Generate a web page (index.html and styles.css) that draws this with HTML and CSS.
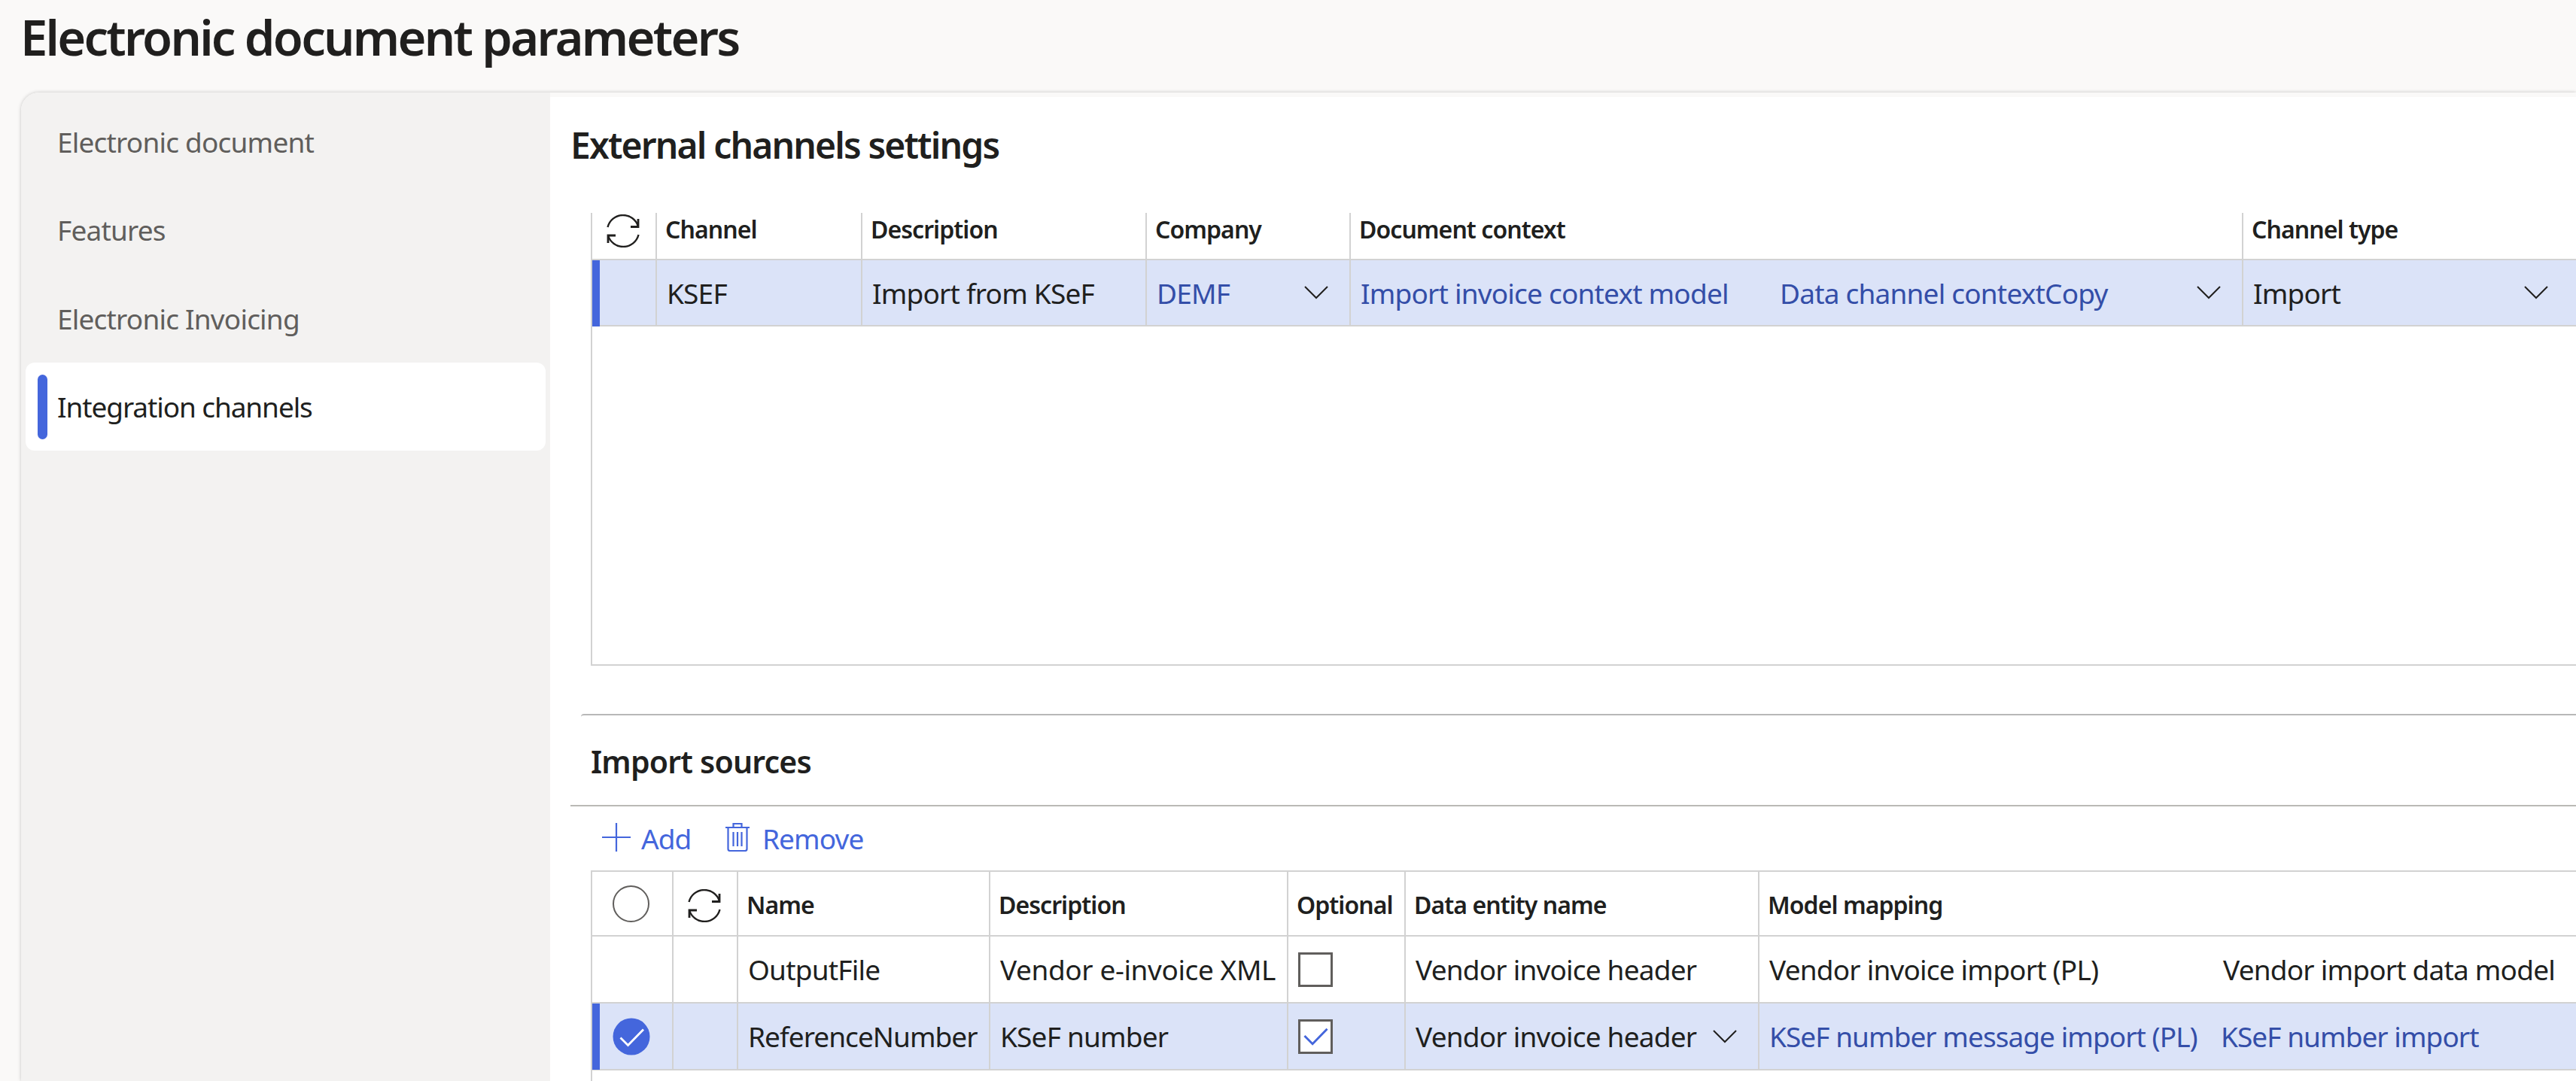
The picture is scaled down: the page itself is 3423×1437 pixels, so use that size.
FILE: index.html
```html
<!DOCTYPE html>
<html lang="en">
<head>
  <meta charset="UTF-8" />
  <meta name="viewport" content="width=device-width, initial-scale=1.0"/>
  <title>Electronic document parameters</title>
  <link rel="stylesheet" href="styles.css">
</head>
<body>
  <svg class="sprite">
    <symbol id="chevron" viewBox="0 0 32 18"><path d="M1 1l15 15L31 1" fill="none" stroke="currentColor" stroke-width="2"/></symbol>
    <symbol id="refresh" viewBox="0 0 44 44">
      <path d="M1.5 17A21 21 0 0 1 42 16M42.500 27A21 21 0 0 1 2 28" fill="none" stroke="currentColor" stroke-width="2.400"/>
      <path d="M42 6v10.500H32M2 38V28h10" fill="none" stroke="currentColor" stroke-width="2.800"/>
    </symbol>
  </svg>

  <h1 class="page-title"><span>Electronic document parameters</span></h1>

  <div class="card">
    <nav class="sidebar">
      <a class="tab">Electronic document</a>
      <a class="tab">Features</a>
      <a class="tab">Electronic Invoicing</a>
      <a class="tab active">Integration channels</a>
    </nav>

    <main class="content">
      <h2 class="section-title"><span>External channels settings</span></h2>

      <div class="grid channels">
        <div class="row head">
          <div class="cell icon-cell"><svg class="refresh"><use href="#refresh"/></svg></div>
          <div class="cell"><span>Channel</span></div>
          <div class="cell"><span>Description</span></div>
          <div class="cell"><span>Company</span></div>
          <div class="cell"><span>Document context</span></div>
          <div class="cell"><span>Channel type</span></div>
        </div>
        <div class="row selected">
          <div class="cell"></div>
          <div class="cell"><span>KSEF</span></div>
          <div class="cell"><span>Import from KSeF</span></div>
          <div class="cell"><span class="link">DEMF</span><svg class="chevron"><use href="#chevron"/></svg></div>
          <div class="cell"><span class="link first">Import invoice context model</span><span class="link">Data channel contextCopy</span><svg class="chevron"><use href="#chevron"/></svg></div>
          <div class="cell type"><span>Import</span><svg class="chevron"><use href="#chevron"/></svg></div>
        </div>
      </div>

      <div class="sources-head">
        <h3 class="sources-title"><span>Import sources</span></h3>
      </div>

      <div class="toolbar">
        <a class="tool"><svg class="plus" viewBox="0 0 38 38"><path d="M19 0v38M0 19h38" fill="none" stroke="currentColor" stroke-width="2.200"/></svg><span class="add">Add</span></a>
        <a class="tool"><svg class="trash" viewBox="0 0 32 38"><path d="M0 6h32M10.500 6V1h11v5M3.500 6v28.500q0 2.500 2.500 2.500h20q2.500 0 2.500-2.500V6M10.500 12v19M16 12v19M21.500 12v19" fill="none" stroke="currentColor" stroke-width="2.200"/></svg><span class="remove">Remove</span></a>
      </div>

      <div class="grid sources">
        <div class="row head">
          <div class="cell icon-cell mark"><i class="ring"></i></div>
          <div class="cell icon-cell"><svg class="refresh"><use href="#refresh"/></svg></div>
          <div class="cell"><span>Name</span></div>
          <div class="cell"><span>Description</span></div>
          <div class="cell"><span>Optional</span></div>
          <div class="cell"><span>Data entity name</span></div>
          <div class="cell"><span>Model mapping</span></div>
        </div>
        <div class="row">
          <div class="cell"></div>
          <div class="cell"></div>
          <div class="cell"><span>OutputFile</span></div>
          <div class="cell"><span class="loose">Vendor e-invoice XML</span></div>
          <div class="cell"><i class="box"></i></div>
          <div class="cell"><span>Vendor invoice header</span></div>
          <div class="cell"><span class="first">Vendor invoice import (PL)</span><span>Vendor import data model</span></div>
        </div>
        <div class="row selected">
          <div class="cell icon-cell mark"><svg class="dot" viewBox="0 0 50 50"><circle cx="25" cy="25" r="24.500" fill="#4466dc"/><path d="M10.500 26.500l10 10L41 15.500" fill="none" stroke="#fff" stroke-width="2.800"/></svg></div>
          <div class="cell"></div>
          <div class="cell"><span class="tight">ReferenceNumber</span></div>
          <div class="cell"><span>KSeF number</span></div>
          <div class="cell"><i class="box"><svg class="tick" viewBox="0 0 34 24"><path d="M1.500 11l11 11L32.500 1.500" fill="none" stroke="#4466dc" stroke-width="3"/></svg></i></div>
          <div class="cell"><span>Vendor invoice header</span><svg class="chevron"><use href="#chevron"/></svg></div>
          <div class="cell"><span class="link first tight">KSeF number message import (PL)</span><span class="link tight">KSeF number import</span></div>
        </div>
      </div>
    </main>
  </div>
</body>
</html>
```
FILE: styles.css
```css
* {
  box-sizing: border-box;
}

html, body {
  margin: 0;
  padding: 0;
  width: 100%;
  height: 100%;
  overflow: hidden;
}

body {
  display: flex;
  flex-direction: column;
  background: #faf9f8;
  color: #201f1e;
  font-family: "Noto Sans", "Open Sans", sans-serif;
  font-size: 37px;
  white-space: nowrap;
}

.sprite {
  display: none;
}

h1, h2, h3 {
  margin: 0;
  font-weight: 600;
}

.page-title {
  flex-shrink: 0;
  height: 123px;
  padding: 4px 0 0 27px;
  font-size: 65px;
  line-height: 90px;
  letter-spacing: -2.75px;
}

.card {
  display: flex;
  flex: 1;
  min-height: 0;
  margin-left: 28px;
  background: #fff;
  border-top-left-radius: 24px;
  box-shadow: 0 0 5px rgba(0, 0, 0, 0.22);
}

.sidebar {
  width: 703px;
  padding: 7px 6px 0;
  background: #f3f2f1;
  border-top-left-radius: 24px;
}

.tab {
  display: flex;
  align-items: center;
  height: 117.3px;
  padding-left: 42px;
  color: #605e5c;
  letter-spacing: -0.8px;
}

.tab.active {
  position: relative;
  background: #fff;
  color: #201f1e;
  border-radius: 12px;
  letter-spacing: -1.1px;
}

.tab.active::before {
  content: "";
  position: absolute;
  left: 16px;
  top: 16px;
  width: 13px;
  height: 86px;
  border-radius: 7px;
  background: #4466dc;
}

.content {
  flex: 1;
  min-width: 0;
  display: flex;
  flex-direction: column;
  padding-left: 27px;
  border-top: 6px solid #faf9f8;
}

.section-title {
  height: 154px;
  padding-top: 31px;
  font-size: 48px;
  line-height: 66px;
  letter-spacing: -1.85px;
}

.grid {
  margin-left: 27px;
  border-left: 2px solid #d2d2d2;
}

.row {
  position: relative;
  display: grid;
  height: 89px;
  border-bottom: 2px solid #d2d2d2;
}

.channels {
  height: 602px;
  border-bottom: 2px solid #d2d2d2;
}

.channels .row {
  grid-template-columns: 86px 273px 378px 271px 1186px 1fr;
}

.channels .head {
  height: 63px;
}

.channels .row.selected {
  height: 88px;
}

.sources {
  flex: 1;
}

.sources .row {
  grid-template-columns: 108px 86px 335px 396px 156px 470px 1fr;
}

.sources .head {
  height: 88px;
  border-top: 2px solid #d2d2d2;
}

.cell {
  display: flex;
  align-items: center;
  min-width: 0;
  padding-left: 13px;
  border-right: 2px solid #d2d2d2;
  letter-spacing: -0.8px;
}

.cell:last-child {
  border-right: 0;
}

.head .cell {
  padding: 2px 0 0 11px;
  font-size: 32px;
  font-weight: 600;
  letter-spacing: -0.95px;
}

.channels .head .cell {
  padding: 0 0 22px 11px;
}

.icon-cell,
.head .icon-cell {
  justify-content: center;
  padding: 0 3px 0 0;
}

.channels .head .icon-cell {
  padding: 0 3px 17px 0;
}

.sources .head .icon-cell .refresh {
  margin-top: 6px;
}

.selected {
  background: #dbe3f8;
}

.selected::before {
  content: "";
  position: absolute;
  left: 0;
  top: 0;
  width: 10px;
  height: 88px;
  background: #4466dc;
}

.link {
  color: #344ea8;
}

.loose {
  letter-spacing: -0.4px;
}

.tight {
  letter-spacing: -0.95px;
}

.chevron {
  width: 32px;
  height: 18px;
  margin: 0 28px 0 auto;
}

.type .chevron {
  margin-right: 37px;
}

.refresh {
  width: 44px;
  height: 44px;
}

.ring {
  width: 49px;
  height: 49px;
  border: 2px solid #605e5c;
  border-radius: 50%;
}

.dot {
  width: 50px;
  height: 50px;
}

.box {
  display: flex;
  align-items: center;
  justify-content: center;
  width: 46px;
  height: 46px;
  background: #fff;
  border: 3px solid #605e5c;
}

.tick {
  width: 33px;
  height: 24px;
}

.channels .first {
  width: 557px;
}

.sources .first {
  width: 603px;
}

.sources .selected .first {
  width: 600px;
}

.sources-head {
  height: 187px;
  padding-top: 64px;
  border-bottom: 2px solid #bab9b5;
}

.sources-title {
  margin-left: 14px;
  height: 121px;
  padding: 33px 0 0 13px;
  border-top: 2px solid #b8b8b8;
  border-top-left-radius: 4px;
  font-size: 41px;
  line-height: 56px;
  letter-spacing: -0.8px;
}

.toolbar {
  display: flex;
  height: 85px;
  padding-left: 42px;
  color: #4466dc;
  letter-spacing: -0.9px;
}

.tool {
  display: flex;
  align-items: center;
  height: 84px;
}

.tool .plus,
.tool .trash {
  margin-top: -2px;
}

.plus {
  width: 38px;
  height: 38px;
  margin-right: 14px;
}

.add {
  width: 112px;
}

.trash {
  width: 32px;
  height: 38px;
  margin-right: 17px;
}
```
